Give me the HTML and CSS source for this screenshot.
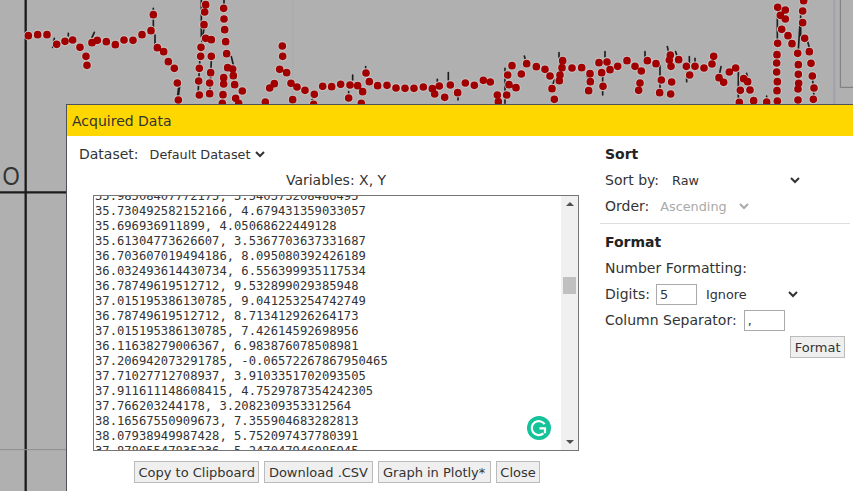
FILE: index.html
```html
<!DOCTYPE html>
<html lang="en">
<head>
<meta charset="utf-8">
<title>Acquired Data</title>
<link rel="stylesheet" href="styles.css">
</head>
<body>
<div class="plot">
  <svg class="plot-svg" viewBox="0 0 2559 1473" width="853" height="491">
    <path class="axis" d="M77 0V1473M0 577H200"/>
    <path class="grid" d="M878 0V320"/>
    <path class="frame" d="M2503 0V320"/>
    <path class="frame-thin" d="M2521 0V262H2559"/>
    <path class="floor" d="M0 1349H200"/>
    <g class="trace">
      <path d="M460 25V44M460 60V90M465 105V135M283 97L276 112M205 100V108M163 115L158 142M536 262L533 285M604 0V110M612 85L606 125M672 0V20M694 170L700 195M1058 225L1058 240M1097 200V210M1046 275V290M950 280L936 300M600 170L594 285M634 180L630 270M540 250L535 290"/>
      <g transform="translate(1290 0)">
        <path d="M22 238V250M55 218V240M84 290V300M225 205V310M283 168L287 182M387 158V172M373 240L366 260M525 155V170M518 230V285M470 225L476 240M645 155V170M690 195V270M712 140L716 158M737 155L740 165M770 215V245M778 170V190M795 175V185M873 200L868 225M925 215V305M950 220L953 235M1010 288V300M1042 50V120M1112 40V110M1133 125L1140 150M1110 70L1105 150M1148 240L1152 290"/>
      </g>
    </g>
    <g class="halo">
      <path d="M85 107h0M113 104h0M141 104h0M170 133h0M195 124h0M218 120h0M240 142h0M258 169h0M261 196h0M276 128h0M292 121h0M319 125h0M346 134h0M372 120h0M399 121h0M426 104h0M453 92h0M460 44h0M472 143h0M491 155h0M505 185h0M523 205h0M532 249h0M535 300h0M603 142h0M602 169h0M598 205h0M596 243h0M598 285h0M617 115h0M612 74h0M614 36h0M617 14h0M634 119h0M634 169h0M632 218h0M629 249h0M629 281h0M671 25h0M672 57h0M674 89h0M677 125h0M680 161h0M683 203h0M698 207h0M700 227h0M704 254h0M727 273h0M707 295h0M716 310h0M671 233h0M671 252h0M669 284h0M667 310h0M796 306h0M809 264h0M823 251h0M839 208h0M848 169h0M847 138h0M860 218h0M873 250h0M891 261h0M915 271h0M943 283h0M941 313h0M968 259h0M995 260h0M1022 253h0M1050 255h0M1073 257h0M1098 219h0M1108 245h0M1088 275h0M1046 294h0M1084 310h0M1133 257h0M1161 256h0M1188 264h0M1215 265h0M1242 265h0M1270 261h0M878 299h0"/>
      <path transform="translate(1290 0)" d="M7 266h0M14 282h0M28 258h0M44 292h0M61 255h0M83 278h0M106 249h0M133 256h0M160 241h0M181 246h0M202 285h0M205 305h0M230 285h0M237 254h0M233 225h0M246 197h0M258 263h0M274 222h0M290 191h0M319 200h0M345 208h0M360 228h0M366 266h0M373 298h0M388 242h0M390 225h0M396 203h0M398 182h0M426 204h0M455 203h0M480 221h0M481 245h0M476 272h0M507 188h0M515 218h0M519 259h0M531 186h0M540 209h0M563 199h0M591 182h0M615 199h0M634 213h0M630 249h0M626 271h0M652 182h0M678 191h0M694 240h0M689 278h0M721 165h0M718 180h0M723 199h0M725 246h0M722 282h0M746 179h0M769 199h0M779 225h0M795 199h0M822 204h0M846 192h0M851 169h0M867 233h0M881 247h0M898 216h0M917 204h0M941 236h0M953 245h0M960 270h0M931 271h0M928 307h0M971 302h0M1010 306h0M1042 303h0M1041 272h0M1042 245h0M1040 216h0M1040 189h0M1041 164h0M1043 130h0M1055 88h0M1051 46h0M1043 22h0M1066 30h0M1066 57h0M1074 107h0M1086 131h0M1103 160h0M1105 194h0M1105 223h0M1106 250h0M1104 267h0M1104 300h0M1124 115h0M1118 68h0M1118 33h0M1121 2h0M1138 155h0M1143 190h0M1147 228h0M1152 264h0M1150 298h0"/>
    </g>
    <g class="dots">
      <path d="M85 107h0M113 104h0M141 104h0M170 133h0M195 124h0M218 120h0M240 142h0M258 169h0M261 196h0M276 128h0M292 121h0M319 125h0M346 134h0M372 120h0M399 121h0M426 104h0M453 92h0M460 44h0M472 143h0M491 155h0M505 185h0M523 205h0M532 249h0M535 300h0M603 142h0M602 169h0M598 205h0M596 243h0M598 285h0M617 115h0M612 74h0M614 36h0M617 14h0M634 119h0M634 169h0M632 218h0M629 249h0M629 281h0M671 25h0M672 57h0M674 89h0M677 125h0M680 161h0M683 203h0M698 207h0M700 227h0M704 254h0M727 273h0M707 295h0M716 310h0M671 233h0M671 252h0M669 284h0M667 310h0M796 306h0M809 264h0M823 251h0M839 208h0M848 169h0M847 138h0M860 218h0M873 250h0M891 261h0M915 271h0M943 283h0M941 313h0M968 259h0M995 260h0M1022 253h0M1050 255h0M1073 257h0M1098 219h0M1108 245h0M1088 275h0M1046 294h0M1084 310h0M1133 257h0M1161 256h0M1188 264h0M1215 265h0M1242 265h0M1270 261h0M878 299h0"/>
      <path transform="translate(1290 0)" d="M7 266h0M14 282h0M28 258h0M44 292h0M61 255h0M83 278h0M106 249h0M133 256h0M160 241h0M181 246h0M202 285h0M205 305h0M230 285h0M237 254h0M233 225h0M246 197h0M258 263h0M274 222h0M290 191h0M319 200h0M345 208h0M360 228h0M366 266h0M373 298h0M388 242h0M390 225h0M396 203h0M398 182h0M426 204h0M455 203h0M480 221h0M481 245h0M476 272h0M507 188h0M515 218h0M519 259h0M531 186h0M540 209h0M563 199h0M591 182h0M615 199h0M634 213h0M630 249h0M626 271h0M652 182h0M678 191h0M694 240h0M689 278h0M721 165h0M718 180h0M723 199h0M725 246h0M722 282h0M746 179h0M769 199h0M779 225h0M795 199h0M822 204h0M846 192h0M851 169h0M867 233h0M881 247h0M898 216h0M917 204h0M941 236h0M953 245h0M960 270h0M931 271h0M928 307h0M971 302h0M1010 306h0M1042 303h0M1041 272h0M1042 245h0M1040 216h0M1040 189h0M1041 164h0M1043 130h0M1055 88h0M1051 46h0M1043 22h0M1066 30h0M1066 57h0M1074 107h0M1086 131h0M1103 160h0M1105 194h0M1105 223h0M1106 250h0M1104 267h0M1104 300h0M1124 115h0M1118 68h0M1118 33h0M1121 2h0M1138 155h0M1143 190h0M1147 228h0M1152 264h0M1150 298h0"/>
    </g>
  </svg>
  <span class="axis-label">O</span>
</div>

<section class="modal">
  <header class="modal-head">Acquired Data</header>
  <div class="modal-body">
    <div class="left">
      <div class="dataset-row">
        <label class="lbl lbl-ds" for="ds">Dataset:</label>
        <select id="ds" class="sel sel-ds"><option>Default Dataset</option></select>
      </div>
      <div class="variables">Variables: X, Y</div>
      <div class="box">
        <div class="box-text">
<pre class="data">35.98508407772175, 3.540373208486495
35.730492582152166, 4.679431359033057
35.696936911899, 4.05068622449128
35.61304773626607, 3.5367703637331687
36.703607019494186, 8.095080392426189
36.032493614430734, 6.556399935117534
36.78749619512712, 9.532899029385948
37.015195386130785, 9.041253254742749
36.78749619512712, 8.713412926264173
37.015195386130785, 7.42614592698956
36.11638279006367, 6.983876078508981
37.206942073291785, -0.06572267867950465
37.71027712708937, 3.9103351702093505
37.911611148608415, 4.7529787354242305
37.766203244178, 3.2082309353312564
38.16567550909673, 7.355904683282813
38.07938949987428, 5.752097437780391
37.87805547835236, 5.247047946985945</pre>
        </div>
        <div class="scrollbar">
          <span class="arrow arrow-up"></span>
          <span class="thumb"></span>
          <span class="arrow arrow-down"></span>
        </div>
        <svg class="grammarly" viewBox="0 0 24 24" width="24" height="24">
          <circle cx="12" cy="12" r="12" fill="#15c39a"/>
          <path class="g-stroke" d="M17.6 8.2A7 7 0 1 0 16.4 17.4"/>
          <path class="g-stroke" d="M12.5 12.4H18V17.2"/>
        </svg>
      </div>
      <div class="actions">
        <button class="btn">Copy to Clipboard</button>
        <button class="btn">Download .CSV</button>
        <button class="btn btn-plotly">Graph in Plotly*</button>
        <button class="btn">Close</button>
      </div>
    </div>
    <aside class="right">
      <div class="panel panel-sort">
        <h3 class="panel-title">Sort</h3>
        <div class="row">
          <label class="lbl" for="sb">Sort by:</label>
          <select id="sb" class="sel sel-sort"><option>Raw</option></select>
        </div>
        <div class="row">
          <label class="lbl" for="or">Order:</label>
          <select id="or" class="sel sel-order" disabled><option>Ascending</option></select>
        </div>
      </div>
      <div class="panel panel-format">
        <h3 class="panel-title">Format</h3>
        <div class="row">Number Formatting:</div>
        <div class="row">
          <label class="lbl lbl-digits" for="dg">Digits:</label>
          <input id="dg" class="field" value="5">
          <select class="sel sel-ignore"><option>Ignore</option></select>
        </div>
        <div class="row">
          <label class="lbl" for="cs">Column Separator:</label>
          <input id="cs" class="field field-sep" value=",">
        </div>
        <div class="format-row"><button class="btn">Format</button></div>
      </div>
    </aside>
  </div>
</section>
</body>
</html>
```
FILE: styles.css
```css
* { box-sizing: border-box; }
html, body { margin: 0; height: 100%; }
body {
  background: #b0b0b0;
  overflow: hidden;
  font-family: "DejaVu Sans", Verdana, sans-serif;
  font-size: 14px;
  color: #333;
}
.plot { position: absolute; inset: 0; }
.plot-svg { position: absolute; left: 0; top: 0; display: block; }
.axis { stroke: #1c1c1c; stroke-width: 7; fill: none; }
.grid { stroke: #a4a4a4; stroke-width: 3; fill: none; stroke-dasharray: 3 3; }
.frame { stroke: #a2a2a8; stroke-width: 6; fill: none; }
.frame-thin { stroke: #777; stroke-width: 3; fill: none; }
.floor { stroke: #8c8c8c; stroke-width: 3; fill: none; }
.trace path { stroke: #1e1e1e; stroke-width: 5; fill: none; stroke-linecap: round; }
.halo path { stroke: #c6c6c6; stroke-width: 29; stroke-linecap: round; fill: none; }
.dots path { stroke: #a00000; stroke-width: 23; stroke-linecap: round; fill: none; }
.axis-label {
  position: absolute;
  left: 1px;
  top: 162px;
  font-family: "Liberation Sans", sans-serif;
  font-size: 26px;
  line-height: 28px;
  color: #333;
  transform: scaleX(.85);
}

.modal {
  position: absolute;
  left: 66px;
  top: 104px;
  width: 800px;
  height: 400px;
  background: #fff;
  border: 0 solid #50505a;
  border-width: 1.5px 0 0 1.5px;
}
.modal-head {
  height: 31px;
  background: #ffd700;
  padding: 8px 0 0 5px;
  font-size: 14px;
  line-height: 17px;
  color: #333;
}
.modal-body { display: flex; }
.left { width: 533px; padding-left: 26px; flex: none; }
.dataset-row { display: flex; align-items: center; height: 20px; margin: 8px 0 0 -14px; }
.lbl { margin-right: 5px; color: #333; }
.lbl-ds { margin-right: 7px; }
.lbl-digits { margin-right: 6px; }
.variables { text-align: center; height: 18px; margin-top: 7px; line-height: 18px; padding-right: 21px; }
.sel {
  font-family: "DejaVu Sans", Verdana, sans-serif;
  font-size: 12.8px;
  color: #333;
  border: 0;
  background: #fff;
  padding: 0;
  height: 18px;
}
.sel:disabled { color: #aaa; opacity: 1; }
.sel-ds { width: 122px; }
.sel-sort { width: 135px; margin-left: 4px; }
.sel-order { width: 96px; margin-left: 2px; }
.sel-ignore { width: 99px; margin-left: 5px; }
.box {
  position: relative;
  display: flex;
  width: 486px;
  height: 256px;
  margin-top: 6px;
  border: 1px solid #767676;
  border-right-width: 1.5px;
  overflow: hidden;
}
.box-text { flex: 1; overflow: hidden; }
.data {
  margin: -7px 0 0 1px;
  font-family: "DejaVu Sans Mono", monospace;
  font-size: 12.17px;
  line-height: 15px;
  color: #333;
}
.scrollbar {
  width: 17px;
  flex: none;
  background: #f0f0f0;
  position: relative;
}
.arrow { position: absolute; left: 5px; width: 0; height: 0; border-left: 4px solid transparent; border-right: 4px solid transparent; }
.arrow-up { top: 6px; border-bottom: 4px solid #505050; }
.arrow-down { bottom: 6px; border-top: 4px solid #505050; }
.thumb { position: absolute; left: 2px; top: 81px; width: 13px; height: 17px; background: #c0c0c0; }
.grammarly { position: absolute; left: 433px; top: 220px; }
.g-stroke { fill: none; stroke: #fff; stroke-width: 2.2; }
.actions { display: flex; gap: 5px; margin-top: 10px; padding-left: 41px; }
.btn {
  font-family: "DejaVu Sans", Verdana, sans-serif;
  font-size: 13px;
  color: #333;
  background: #efefef;
  border: 1px solid #bbb;
  height: 22px;
  padding: 0 3.5px;
  white-space: nowrap;
}
.btn-plotly { padding: 0 4.5px; }
.right { flex: 1; }
.panel { width: 250px; padding-left: 5px; }
.panel-sort { height: 88px; border-bottom: 1px solid #ddd; padding-top: 9px; }
.panel-format { padding-top: 9px; }
.panel-title { margin: 0 0 4px; font-size: 14px; line-height: 18px; font-weight: 700; color: #222; }
.row { display: flex; align-items: center; height: 26px; color: #333; }
.field {
  width: 41px;
  height: 21px;
  border: 1px solid #aaa;
  padding: 0 3px;
  font-family: "DejaVu Sans", Verdana, sans-serif;
  font-size: 12.8px;
  color: #333;
  background: #fff;
  flex: none;
}
.field-sep { margin-left: 2px; }
.format-row { width: 240px; display: flex; justify-content: flex-end; margin-top: 3px; }
```
